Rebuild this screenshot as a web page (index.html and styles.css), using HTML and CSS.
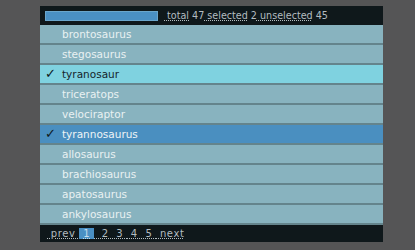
FILE: index.html
```html
<!DOCTYPE html>
<html lang="en">
<head>
    <meta charset="UTF-8">
    <title>Dinosaurs</title>
    <link rel="stylesheet" href="styles.css">
</head>
<body>
    <div class="panel">
        <div class="head">
            <div class="bar"></div>
            <div class="counts">
                <a href="#">&nbsp;total</a> 47<a href="#">&nbsp;selected</a> 2<a href="#">&nbsp;unselected</a> 45
            </div>
        </div>
        <ul class="list">
            <li>brontosaurus</li>
            <li>stegosaurus</li>
            <li class="picked"><span class="tick">&#10003;</span>tyranosaur</li>
            <li>triceratops</li>
            <li>velociraptor</li>
            <li class="active"><span class="tick">&#10003;</span>tyrannosaurus</li>
            <li>allosaurus</li>
            <li>brachiosaurus</li>
            <li>apatosaurus</li>
            <li>ankylosaurus</li>
        </ul>
        <div class="pager">
            <a href="#">&nbsp;prev&nbsp;</a><a href="#" class="current">1</a><a href="#">&nbsp;&nbsp;2&nbsp;</a><a href="#">&nbsp;3&nbsp;</a><a href="#">&nbsp;4&nbsp;</a><a href="#">&nbsp;5&nbsp;</a><a href="#">&nbsp;next</a>
        </div>
    </div>
</body>
</html>
```

FILE: styles.css
```css
body {
    margin: 0;
    background-color: #555556;
    font-family: "DejaVu Sans", sans-serif;
    font-size: 10.5px;
}
.panel {
    width: 343px;
    margin: 6px 0 0 40px;
    background-color: #0f181b;
}
.head {
    display: flex;
    align-items: center;
    height: 19px;
    padding-left: 5px;
}
.bar {
    width: 113px;
    height: 10px;
    background-color: #4a90c4;
    border: 1px solid #6aa6cc;
    box-sizing: border-box;
}
.counts {
    margin-left: 6px;
    color: #b3bcc0;
    font-size: 9.6px;
}
.counts a {
    color: #b3bcc0;
    text-decoration: underline dotted;
}
.list {
    list-style: none;
    margin: 0;
    padding: 0;
}
.list li {
    position: relative;
    height: 18px;
    line-height: 18px;
    padding-left: 22px;
    background-color: #88b3bf;
    color: #e9f1f2;
    border-bottom: 2px solid #64848c;
}
.list li.picked {
    background-color: #7fd2e0;
    color: #15252b;
}
.list li.active {
    background-color: #4a8fc0;
    color: #eef4f6;
}
.tick {
    position: absolute;
    left: 5px;
    color: #0e1a1e;
    font-size: 13px;
}
.pager {
    height: 17px;
    display: flex;
    align-items: center;
    padding-left: 7px;
    font-size: 10px;
    letter-spacing: 0.6px;
}
.pager a {
    color: #b3bcc0;
    text-decoration: underline dotted;
    white-space: pre;
}
.pager a.current {
    background-color: #4a90c4;
    padding: 0 4px;
    color: #c4dcec;
}
```
